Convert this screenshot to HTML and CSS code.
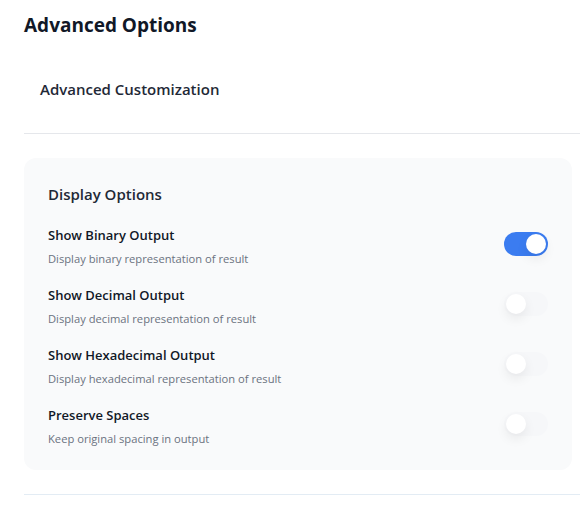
FILE: index.html
```html
<!DOCTYPE html>
<html>
<head>
<meta charset="utf-8">
<link rel="stylesheet" href="styles.css">
</head>
<body>
<div class="page">
  <h1 class="title">Advanced Options</h1>
  <div class="section-head">Advanced Customization</div>
  <div class="card">
    <h2 class="card-title">Display Options</h2>
    <div class="row">
      <div class="text">
        <div class="label">Show Binary Output</div>
        <div class="desc">Display binary representation of result</div>
      </div>
      <div class="toggle on"><span class="knob"></span></div>
    </div>
    <div class="row">
      <div class="text">
        <div class="label">Show Decimal Output</div>
        <div class="desc">Display decimal representation of result</div>
      </div>
      <div class="toggle"><span class="knob"></span></div>
    </div>
    <div class="row">
      <div class="text">
        <div class="label">Show Hexadecimal Output</div>
        <div class="desc">Display hexadecimal representation of result</div>
      </div>
      <div class="toggle"><span class="knob"></span></div>
    </div>
    <div class="row">
      <div class="text">
        <div class="label">Preserve Spaces</div>
        <div class="desc">Keep original spacing in output</div>
      </div>
      <div class="toggle"><span class="knob"></span></div>
    </div>
  </div>
  <div class="divider"></div>
</div>
</body>
</html>
```

FILE: styles.css
```css
* { box-sizing: border-box; }
html, body { margin: 0; padding: 0; background: #fff; }
body {
  font-family: "Open Sans", "Noto Sans", sans-serif;
  color: #111827;
  overflow: hidden;
}
.page {
  padding: 12px 0 0 24px;
}
.title {
  margin: 0;
  font-size: 19px;
  font-weight: 700;
  line-height: 26px;
  color: #111827;
}
.section-head {
  margin-top: 40px;
  padding: 0 0 33px 16px;
  font-size: 15px;
  font-weight: 600;
  line-height: 22px;
  color: #1f2937;
  border-bottom: 1px solid #e5e7eb;
}
.card {
  margin-top: 24px;
  width: 548px;
  background: #f9fafb;
  border-radius: 12px;
  padding: 24px 24px 14px 24px;
}
.card-title {
  margin: 0 0 10px 0;
  font-size: 15px;
  font-weight: 600;
  line-height: 24px;
  color: #1f2937;
}
.row {
  display: flex;
  align-items: center;
  justify-content: space-between;
  height: 60px;
}
.label {
  font-size: 13px;
  font-weight: 600;
  line-height: 18px;
  color: #111827;
}
.desc {
  margin-top: 7px;
  font-size: 11.2px;
  line-height: 16px;
  color: #6b7280;
}
.toggle {
  position: relative;
  width: 44px;
  height: 24px;
  border-radius: 12px;
  background: #f6f7f9;
  margin-top: -4px;
}
.toggle.on { background: #3b7cf0; }
.knob {
  position: absolute;
  top: 2px;
  left: 2px;
  width: 20px;
  height: 20px;
  border-radius: 50%;
  background: #fff;
  box-shadow: 0 5px 12px rgba(0,0,0,0.07);
}
.toggle.on .knob { left: 22px; }
.divider {
  margin-top: 24px;
  border-top: 1px solid #e3ecf4;
}
```
